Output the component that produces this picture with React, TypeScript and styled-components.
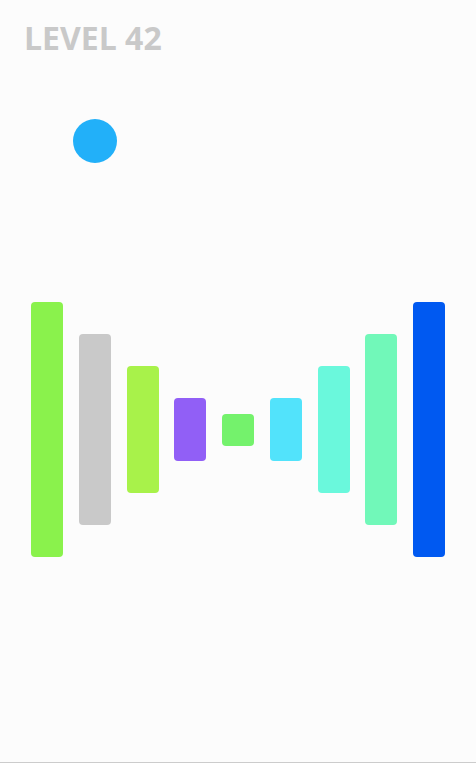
import React from "react";
import styled, { createGlobalStyle } from "styled-components";

const Global = createGlobalStyle`
  html, body { margin: 0; padding: 0; background: #fcfcfc; }
  #root { height: 100vh; }
`;

const Screen = styled.div`
  box-sizing: border-box;
  height: 763px;
  background: #fcfcfc;
  border-bottom: 1px solid #cccccc;
  display: flex;
  flex-direction: column;
  overflow: hidden;
`;

const Title = styled.h1`
  margin: 0;
  padding: 18px 0 0 24px;
  font-family: "Open Sans", "Noto Sans", sans-serif;
  font-weight: 700;
  font-size: 32px;
  line-height: 40px;
  color: #c9c9c9;
  letter-spacing: 0;
`;

const Ball = styled.div`
  width: 44px;
  height: 44px;
  border-radius: 50%;
  background: #22b0f9;
  margin: 61px 0 0 73px;
`;

const BarRow = styled.div`
  margin-top: 139px;
  height: 255px;
  display: flex;
  align-items: center;
  justify-content: center;
  gap: 15.75px;
`;

const Bar = styled.div<{ $h: number; $c: string }>`
  width: 32px;
  height: ${(p) => p.$h}px;
  background: ${(p) => p.$c};
  border-radius: 4px;
  flex: none;
`;

const bars = [
  { h: 255, c: "#8af24c" },
  { h: 191, c: "#c9c9c9" },
  { h: 127, c: "#a8f24a" },
  { h: 63, c: "#915ff6" },
  { h: 32, c: "#74f26c" },
  { h: 63, c: "#52e3fb" },
  { h: 127, c: "#6af8dc" },
  { h: 191, c: "#71f8b9" },
  { h: 255, c: "#0059f1" },
];

export default function App() {
  return (
    <>
      <Global />
      <Screen>
        <Title>LEVEL 42</Title>
        <Ball />
        <BarRow>
          {bars.map((b, i) => (
            <Bar key={i} $h={b.h} $c={b.c} />
          ))}
        </BarRow>
      </Screen>
    </>
  );
}
